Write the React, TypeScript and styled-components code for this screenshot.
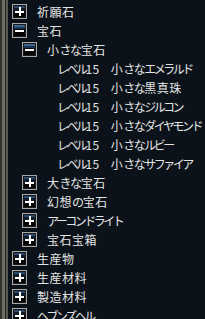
import React from "react";
import styled, { createGlobalStyle } from "styled-components";

const Global = createGlobalStyle`
  html, body { margin: 0; padding: 0; background: #0c1219; }
  #root { width: 205px; height: 319px; overflow: hidden; }
`;

const Frame = styled.div`
  display: flex;
  width: 205px;
  height: 319px;
  overflow: hidden;
  background: #0c1219;
`;

const Edge = styled.div`
  flex: 0 0 8px;
  background: linear-gradient(
    to right,
    #30342d 0 2px,
    #6c7062 2px 5px,
    #262924 5px 6px,
    #595d51 6px 8px
  );
`;

const List = styled.div`
  flex: 1;
  display: flex;
  flex-direction: column;
  padding-top: 2px;
`;

const Row = styled.div<{ $level: number; $leaf?: boolean }>`
  display: flex;
  align-items: center;
  height: 19px;
  flex: 0 0 19px;
  padding-left: ${(p) => (p.$leaf ? 49 : 4 + p.$level * 10)}px;
  font-family: "Noto Sans CJK JP", "Noto Sans", sans-serif;
  font-size: 12px;
  color: #e4e4e4;
  white-space: nowrap;
`;

type Kind = "kata" | "hira" | "digit" | "other";

const spacing: Record<Kind, string> = {
  kata: "-2.5px",
  hira: "-1.4px",
  digit: "0.4px",
  other: "0.5px",
};

const Run = styled.span<{ $kind: Kind }>`
  letter-spacing: ${(p) => spacing[p.$kind]};
`;

const kindOf = (ch: string): Kind => {
  const c = ch.charCodeAt(0);
  if (c >= 0x30a0 && c <= 0x30ff) return "kata";
  if (c >= 0x3040 && c <= 0x309f) return "hira";
  if (c >= 0x30 && c <= 0x39) return "digit";
  return "other";
};

function Jp({ text }: { text: string }) {
  const runs: { kind: Kind; s: string }[] = [];
  for (const ch of Array.from(text)) {
    const k = kindOf(ch);
    const last = runs[runs.length - 1];
    if (last && last.kind === k) last.s += ch;
    else runs.push({ kind: k, s: ch });
  }
  return (
    <span>
      {runs.map((r, i) => (
        <Run key={i} $kind={r.kind}>
          {r.s}
        </Run>
      ))}
    </span>
  );
}

const Box = styled.span<{ $open: boolean }>`
  position: relative;
  flex: 0 0 15px;
  width: 15px;
  height: 15px;
  box-sizing: border-box;
  margin-right: 10px;
  border: 1px solid #a8a8a8;
  box-shadow: inset 0 0 0 1px #1a1a1a;
  background: ${(p) =>
    p.$open
      ? "linear-gradient(to bottom, #1a1a1a 0 1px, #3c6492 1px 3px, #1d3554 3px 5px, #050505 5px)"
      : "linear-gradient(to bottom, #1a1a1a 0 1px, #2a476c 1px 3px, #101c2c 3px 6px, #040404 6px)"};
  &::before {
    content: "";
    position: absolute;
    left: 2px;
    right: 2px;
    top: 5.5px;
    height: 2px;
    background: #ffffff;
  }
  &::after {
    content: "";
    display: ${(p) => (p.$open ? "none" : "block")};
    position: absolute;
    top: 2px;
    bottom: 2px;
    left: 5.5px;
    width: 2px;
    background: #ffffff;
  }
`;

const Level = styled.span`
  margin-right: 11px;
`;

type Item = { label: string; level: number; open?: boolean; leaf?: boolean };

const items: Item[] = [
  { label: "祈願石", level: 0 },
  { label: "宝石", level: 0, open: true },
  { label: "小さな宝石", level: 1, open: true },
  { label: "小さなエメラルド", level: 2, leaf: true },
  { label: "小さな黒真珠", level: 2, leaf: true },
  { label: "小さなジルコン", level: 2, leaf: true },
  { label: "小さなダイヤモンド", level: 2, leaf: true },
  { label: "小さなルビー", level: 2, leaf: true },
  { label: "小さなサファイア", level: 2, leaf: true },
  { label: "大きな宝石", level: 1 },
  { label: "幻想の宝石", level: 1 },
  { label: "アーコンドライト", level: 1 },
  { label: "宝石宝箱", level: 1 },
  { label: "生産物", level: 0 },
  { label: "生産材料", level: 0 },
  { label: "製造材料", level: 0 },
  { label: "ヘブンズヘル", level: 0 },
];

export default function App() {
  return (
    <>
      <Global />
      <Frame>
        <Edge />
        <List>
          {items.map((it, i) => (
            <Row key={i} $level={it.level} $leaf={it.leaf}>
              {it.leaf ? (
                <>
                  <Level>
                    <Jp text="レベル15" />
                  </Level>
                  <Jp text={it.label} />
                </>
              ) : (
                <>
                  <Box $open={!!it.open} />
                  <Jp text={it.label} />
                </>
              )}
            </Row>
          ))}
        </List>
      </Frame>
    </>
  );
}
